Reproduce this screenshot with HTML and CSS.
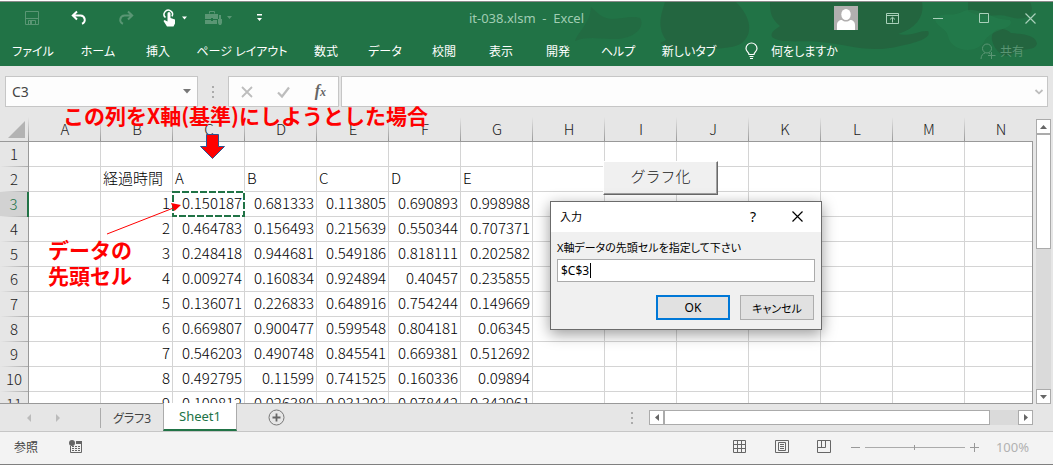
FILE: index.html
```html
<!DOCTYPE html>
<html lang="ja">
<head>
<meta charset="utf-8">
<meta name="viewport" content="width=device-width, initial-scale=1">
<title>it-038.xlsm - Excel</title>
<link rel="stylesheet" href="styles.css">
</head>
<body>
<div class="app">
  <header class="ribbon">
    <svg class="ribbon-art" width="500" height="64" viewBox="553 2 500 64" aria-hidden="true">
      <g fill="#23653f">
        <path d="M575 41C579 30 590 24 591 7L600 15C612 24 628 14 640 18C646 27 634 40 612 39C600 39 588 36 575 41Z" opacity=".6"/>
        <path d="M665 2H736C752 18 753 34 742 43C728 52 700 46 690 52C684 50 672 50 660 43L666 40C656 26 662 12 665 2Z" opacity=".9"/>
        <path d="M770 2H922C925 18 914 29 898 34C910 37 920 30 928 31C932 37 920 42 900 46C870 54 846 44 820 42C800 40 780 44 772 37C770 32 776 29 780 26C770 18 770 10 770 2Z"/>
        <path d="M968 2H1030C1036 14 1026 22 1010 17C996 12 982 20 968 11Z" opacity=".8"/>
        <path d="M992 40C990 28 1004 26 1011 33C1020 34 1036 34 1037 44C1034 52 1022 47 1012 54C1004 60 994 50 992 40Z"/>
      </g>
      <path d="M935 20C942 10 950 18 962 12C976 4 990 20 1010 20C1016 30 990 28 984 42C974 56 950 50 948 36C946 28 938 28 935 20Z" fill="#23804d" opacity=".5"/>
    </svg>
    <div class="titlebar">
      <div class="quick">
        <button class="icon dim q-save" aria-label="上書き保存"><svg width="16" height="16" viewBox="0 0 16 16"><path d="M1.500 1.500h13v13h-13zM2 8.500h12M4.500 14.500v-4h7v4" fill="none" stroke="currentColor"/><path d="M6 11h2v3H6z" fill="currentColor"/></svg></button>
        <button class="icon q-undo" aria-label="元に戻す"><svg width="16" height="16" viewBox="0 0 16 16"><path d="M6 1.500L1.800 5.500 6 9.500M2 5.500h7.500a4.300 4.300 0 0 1 1.500 8.300" fill="none" stroke="currentColor" stroke-width="2"/></svg></button>
        <button class="icon dim q-redo" aria-label="やり直し"><svg width="16" height="16" viewBox="0 0 16 16"><path d="M10 1.500l4.200 4L10 9.500M14 5.500H6.500A4.300 4.300 0 0 0 5 13.800" fill="none" stroke="currentColor" stroke-width="2"/></svg></button>
        <button class="icon q-touch" aria-label="タッチ/マウス モードの切り替え"><svg width="24" height="18" viewBox="0 0 24 18"><path d="M3.500 8.500a4.200 4.200 0 1 1 6.500-1.200" fill="none" stroke="currentColor" stroke-width="1.500"/><path d="M5.500 4.500a1.500 1.500 0 0 1 3 0v4.500l4.500 1.500v4l-1.500 3H5L1.500 12l1-1 3 1.500z" fill="currentColor"/><path d="M20 7.500h5l-2.500 3z" fill="currentColor"/></svg></button>
        <button class="icon dim q-tools" aria-label="ツール"><svg width="28" height="16" viewBox="0 0 28 16"><path d="M4.500 3.500v-2h5v2" fill="none" stroke="currentColor"/><path d="M0 4h13v5H8V8H6v1H0zM0 10h6v1h2v-1h4v4H0zM14 5h2v4h-2zM13 9h4v4l-1 2h-2l-1-2zM22 6h5l-2.500 3z" fill="currentColor"/></svg></button>
        <button class="icon q-more" aria-label="クイック アクセス ツール バーのユーザー設定"><svg width="7" height="8" viewBox="0 0 7 8"><path d="M1 0h5v1.500H1zM1 4h5L3.500 7z" fill="currentColor"/></svg></button>
      </div>
      <h1 class="title">it-038.xlsm  -  Excel</h1>
      <div class="winctl">
        <button class="icon avatar" aria-label="アカウント"><svg width="24" height="24" viewBox="0 0 24 24"><path fill="#b1afaf" d="M0 0h24v24H0z"/><g fill="#fff"><ellipse cx="12" cy="8.500" rx="4.700" ry="5.500"/><path d="M3 24v-5c0-3 2-5 5-5 2 2 6 2 8 0 3 0 5 2 5 5v5z"/></g></svg></button>
        <button class="icon options" aria-label="リボンの表示オプション"><svg width="13" height="11" viewBox="0 0 13 11"><path d="M.5.5h12v10H.5zM1 2.500h11M6.500 9.500V4.500M4 6.500l2.500-2.300L9 6.500" fill="none" stroke="currentColor"/></svg></button>
        <button class="icon" aria-label="最小化"><svg width="10" height="11" viewBox="0 0 10 11"><path d="M0 5.500h10" stroke="currentColor"/></svg></button>
        <button class="icon" aria-label="最大化"><svg width="10" height="10" viewBox="0 0 10 10"><path d="M.5.5h9v9h-9z" fill="none" stroke="currentColor"/></svg></button>
        <button class="icon" aria-label="閉じる"><svg width="11" height="11" viewBox="0 0 11 11"><path d="M.5.5l10 10M10.500.5l-10 10" stroke="currentColor" stroke-width="1.200"/></svg></button>
      </div>
    </div>
    <nav class="tabs">
      <div class="tablist">
        <button>ファイル</button><button>ホーム</button><button>挿入</button><button>ページ レイアウト</button><button>数式</button><button>データ</button><button>校閲</button><button>表示</button><button>開発</button><button>ヘルプ</button><button>新しいタブ</button>
      </div>
      <button class="tell"><svg width="13" height="17" viewBox="0 0 13 17"><path d="M4 11.500C4 9 1 8.500 1 5.500a5.300 5.300 0 0 1 11 0C12 8.500 9 9 9 11.500zM4.500 13.500h4M5 15.500h3" fill="none" stroke="currentColor" stroke-width="1.200"/></svg>何をしますか</button>
      <button class="share"><svg width="16" height="17" viewBox="0 0 16 17"><circle cx="7" cy="5.500" r="4.500" fill="none" stroke="currentColor"/><path d="M1 16c0-3.500 2-5.500 4-6M8.500 9.800l2 1.200M11.500 9v7M8 12.500h7.500" fill="none" stroke="currentColor"/></svg>共有</button>
    </nav>
  </header>

  <div class="formula">
    <div class="namebox"><input aria-label="名前ボックス" value="C3"><svg width="8" height="5" viewBox="0 0 8 5"><path d="M0 0h8L4 4.500z" fill="#777"/></svg></div>
    <span class="dots"></span>
    <div class="fx">
      <button aria-label="キャンセル"><svg width="12" height="12" viewBox="0 0 12 12"><path d="M1 1l10 10M11 1L1 11" stroke="#bdbdbd" stroke-width="1.800"/></svg></button>
      <button aria-label="入力"><svg width="13" height="12" viewBox="0 0 13 12"><path d="M1 6.500l4 4L12 1.500" fill="none" stroke="#bdbdbd" stroke-width="2.200"/></svg></button>
      <button class="fxbtn" aria-label="関数の挿入"><i>f</i><i class="sub">x</i></button>
    </div>
    <div class="fbar"><input aria-label="数式バー"><svg width="8" height="6" viewBox="0 0 8 6"><path d="M.5 1L4 4.300 7.500 1" fill="none" stroke="#bdbdbd" stroke-width="1.800"/></svg></div>
  </div>

  <main class="work">
    <div class="grid">
      <table>
        <colgroup><col class="c-head"><col span="14" class="c-cell"></colgroup>
        <thead>
          <tr><th class="corner"><svg width="17" height="17" viewBox="0 0 17 17"><path d="M17 0v17H0z" fill="#b3b3b3"/></svg></th><th>A<th>B<th>C<th>D<th>E<th>F<th>G<th>H<th>I<th>J<th>K<th>L<th>M<th>N</tr>
        </thead>
        <tbody>
          <tr><th>1<td><td><td><td><td><td><td><td><td><td><td><td><td><td></tr>
          <tr class="labels"><th>2<td><td>経過時間<td>A<td>B<td>C<td>D<td>E<td><td><td><td><td><td><td></tr>
          <tr class="current"><th>3<td><td>1<td>0.150187<td>0.681333<td>0.113805<td>0.690893<td>0.998988<td><td><td><td><td><td><td></tr>
          <tr><th>4<td><td>2<td>0.464783<td>0.156493<td>0.215639<td>0.550344<td>0.707371<td><td><td><td><td><td><td></tr>
          <tr><th>5<td><td>3<td>0.248418<td>0.944681<td>0.549186<td>0.818111<td>0.202582<td><td><td><td><td><td><td></tr>
          <tr><th>6<td><td>4<td>0.009274<td>0.160834<td>0.924894<td>0.40457<td>0.235855<td><td><td><td><td><td><td></tr>
          <tr><th>7<td><td>5<td>0.136071<td>0.226833<td>0.648916<td>0.754244<td>0.149669<td><td><td><td><td><td><td></tr>
          <tr><th>8<td><td>6<td>0.669807<td>0.900477<td>0.599548<td>0.804181<td>0.06345<td><td><td><td><td><td><td></tr>
          <tr><th>9<td><td>7<td>0.546203<td>0.490748<td>0.845541<td>0.669381<td>0.512692<td><td><td><td><td><td><td></tr>
          <tr><th>10<td><td>8<td>0.492795<td>0.11599<td>0.741525<td>0.160336<td>0.09894<td><td><td><td><td><td><td></tr>
          <tr><th>11<td><td>9<td>0.109812<td>0.026380<td>0.931203<td>0.078442<td>0.342961<td><td><td><td><td><td><td></tr>
        </tbody>
      </table>
    </div>
    <div class="vscroll">
      <button class="sbtn" aria-label="上へスクロール"><svg width="7" height="4" viewBox="0 0 7 4"><path d="M0 4h7L3.500 0z" fill="#666"/></svg></button>
      <div class="vtrack"><div class="vthumb"></div></div>
      <button class="sbtn" aria-label="下へスクロール"><svg width="7" height="4" viewBox="0 0 7 4"><path d="M0 0h7L3.500 4z" fill="#666"/></svg></button>
    </div>

    <svg class="marks" width="260" height="130" viewBox="0 0 260 130" aria-hidden="true">
      <rect x="173" y="75" width="71" height="24" fill="none" stroke="#fff" stroke-width="2"/>
      <rect x="173" y="75" width="71" height="24" fill="none" stroke="#217346" stroke-width="2" stroke-dasharray="7 2"/>
      <path d="M206.500 17.500h12v12h6L212.500 41.500l-12-12h6z" fill="#f00" stroke="#2f528f"/>
      <path d="M107 117L176 90" stroke="#f00" fill="none"/>
      <path d="M181 88l-10-2 3.500 8z" fill="#f00"/>
    </svg>
    <p class="note note-axis">この列をX軸(基準)にしようとした場合</p>
    <p class="note note-head">データの<br>先頭セル</p>
    <button class="chartbtn">グラフ化</button>

    <form class="dialog" role="dialog" aria-labelledby="dlg-title">
      <div class="dlg-bar">
        <h2 id="dlg-title">入力</h2>
        <button type="button" aria-label="ヘルプ">?</button>
        <button type="button" aria-label="閉じる"><svg width="11" height="11" viewBox="0 0 11 11"><path d="M.5.5l10 10M10.500.5l-10 10" stroke="#000" stroke-width="1.200"/></svg></button>
      </div>
      <div class="dlg-body">
        <label for="ref">X軸データの先頭セルを指定して下さい</label>
        <div class="dlg-field"><input id="ref" value="$C$3" size="4"><span class="caret"></span></div>
        <div class="dlg-actions"><button type="button" class="primary">OK</button><button type="button">キャンセル</button></div>
      </div>
    </form>
  </main>

  <div class="sheets">
    <div class="sheet-nav">
      <button aria-label="前のシート"><svg width="4" height="8" viewBox="0 0 4 8"><path d="M4 0v8L0 4z" fill="#bbb"/></svg></button>
      <button aria-label="次のシート"><svg width="4" height="8" viewBox="0 0 4 8"><path d="M0 0v8l4-4z" fill="#bbb"/></svg></button>
    </div>
    <button class="sheet">グラフ3</button>
    <button class="sheet active">Sheet1</button>
    <button class="add" aria-label="新しいシート"><svg width="17" height="17" viewBox="0 0 17 17"><circle cx="8.500" cy="8.500" r="7.500" fill="none" stroke="#777"/><path d="M8.500 4.500v8M4.500 8.500h8" stroke="#666" stroke-width="1.800"/></svg></button>
    <span class="dots"></span>
    <div class="hscroll">
      <button class="sbtn" aria-label="左へスクロール"><svg width="4" height="7" viewBox="0 0 4 7"><path d="M4 0v7L0 3.500z" fill="#666"/></svg></button>
      <div class="htrack"><div class="hthumb"></div></div>
      <button class="sbtn" aria-label="右へスクロール"><svg width="4" height="7" viewBox="0 0 4 7"><path d="M0 0v7l4-3.500z" fill="#666"/></svg></button>
    </div>
  </div>

  <footer class="status">
    <span>参照</span>
    <button class="macro" aria-label="マクロの記録"><svg width="14" height="14" viewBox="0 0 14 14"><path d="M1.500 6v6.500h11V2" fill="none" stroke="#666"/><path d="M7 1h6v3H7z" fill="#666"/><circle cx="3" cy="3" r="3" fill="#666"/><path d="M3 6.500h2m1 0h2m1 0h2M3 8.500h2m1 0h2m1 0h2M3 10.500h2m1 0h2m1 0h2" stroke="#666"/></svg></button>
    <div class="views">
      <button aria-label="標準"><svg width="14" height="14" viewBox="0 0 14 14"><path d="M.5.5h12v12H.5zM4.500.5v12M8.500.5v12M.5 4.500h12M.5 8.500h12" fill="none" stroke="#666"/></svg></button>
      <button aria-label="ページ レイアウト"><svg width="14" height="14" viewBox="0 0 14 14"><path d="M.5.5h13v12H.5zM3.500 2.500h7v8h-7zM5 4.500h4M5 6.500h4M5 8.500h4" fill="none" stroke="#666"/></svg></button>
      <button aria-label="改ページ プレビュー"><svg width="14" height="14" viewBox="0 0 14 14"><path d="M.5.5h13v12H.5zM.5 7.500h8M8.500 7.500v-7M4.500.5v7" fill="none" stroke="#666"/></svg></button>
    </div>
    <div class="zoom">
      <button aria-label="縮小"><svg width="9" height="9" viewBox="0 0 9 9"><path d="M0 4.500h9" stroke="#999"/></svg></button>
      <input type="range" min="0" max="200" value="100" aria-label="ズーム">
      <button aria-label="拡大"><svg width="9" height="9" viewBox="0 0 9 9"><path d="M0 4.500h9M4.500 0v9" stroke="#999"/></svg></button>
      <output>100%</output>
    </div>
  </footer>
</div>
</body>
</html>
```
FILE: styles.css
```css
* { box-sizing: border-box; }

body {
  margin: 0;
  font-family: "Noto Sans", "Noto Sans CJK JP", sans-serif;
  font-size: 12px;
  font-feature-settings: "palt";
  color: #222;
}

button, input {
  font: inherit;
  font-feature-settings: inherit;
  color: inherit;
  margin: 0;
  padding: 0;
  border: 0;
  background: none;
  outline: 0;
}

button { white-space: nowrap; }
svg { display: block; flex: none; overflow: visible; }

.app {
  display: flex;
  flex-direction: column;
  height: 100vh;
  overflow: hidden;
  background: #e6e6e6;
  border-top: 1px solid #fff;
}

/* title bar and ribbon tabs */
.ribbon {
  position: relative;
  background: #217346;
  border-top: 1px solid #8a8a8a;
  color: #fff;
}
.ribbon-art { position: absolute; top: 0; right: 0; }
.titlebar {
  position: relative;
  display: grid;
  grid-template-columns: 1fr auto 1fr;
  align-items: center;
  height: 32px;
}
.quick { display: flex; align-items: center; padding-left: 24px; }
.dim { color: #5a9674; }
.q-undo { margin-left: 31px; }
.q-redo { margin-left: 31px; }
.q-touch { margin-left: 28px; }
.q-tools { margin-left: 19px; }
.q-more { margin-left: 23px; }
.title {
  margin: 0;
  font-size: 13px;
  font-weight: 400;
  white-space: pre;
  color: #a0cdb3;
}
.winctl {
  display: flex;
  align-items: center;
  justify-content: flex-end;
  gap: 36px;
  padding-right: 17px;
  color: #a9d0ba;
}
.avatar { margin-right: -8px; }
.options { margin-right: -2px; }

.tabs { position: relative; display: flex; align-items: center; height: 32px; padding-top: 2px; }
.tablist {
  display: grid;
  grid-template-columns: 66px 64px 56px 112px 56px 62px 56px 58px 56px 64px 78px;
}
.tell, .share { display: flex; align-items: center; }
.tell { gap: 13px; margin-left: 17px; }
.share { gap: 4px; margin-left: auto; padding-right: 29px; color: #5a9674; }

/* formula bar */
.formula { display: flex; align-items: center; height: 51px; padding: 0 5px; }
.namebox, .fx, .fbar {
  display: flex;
  align-items: center;
  height: 31px;
  border: 1px solid #c6c6c6;
  background: #fdfdfd;
}
.namebox { width: 193px; padding: 0 6px; }
.namebox input { flex: 1; min-width: 0; font-size: 14px; color: #444; }
.dots {
  width: 2px;
  height: 12px;
  background: repeating-linear-gradient(#ababab 0 2px, transparent 2px 5px);
}
.formula .dots { margin: 0 14px; }
.fx { width: 111px; justify-content: space-between; padding: 0 12px; }
.fxbtn { font-family: "Liberation Serif", serif; font-size: 16px; font-weight: 700; color: #666; line-height: 16px; }
.sub { font-size: 12px; }
.fbar { flex: 1; margin-left: 2px; padding-right: 4px; }
.fbar input { flex: 1; min-width: 0; }

/* worksheet */
.work { position: relative; flex: 1; min-height: 0; display: flex; }
.grid {
  position: relative;
  flex: 1;
  min-width: 0;
  overflow: hidden;
  border-bottom: 1px solid #999;
}
.grid::after {
  content: "";
  position: absolute;
  top: 24px;
  right: 0;
  bottom: 0;
  border-right: 1px solid #999;
}
table {
  width: 1037px;
  table-layout: fixed;
  border-spacing: 0;
  font-family: "Noto Sans CJK JP", sans-serif;
  font-feature-settings: normal;
  font-size: 15px;
  font-weight: 300;
  line-height: 16px;
  color: #000;
}
.c-head { width: 29px; }
.c-cell { width: 72px; }
th, td { height: 25px; padding: 0 2px 2px; white-space: nowrap; overflow: hidden; }
th { font-weight: 300; text-align: center; color: #222; }
td { text-align: right; background: #fff; border-right: 1px solid #d4d4d4; border-bottom: 1px solid #d4d4d4; }
thead th {
  padding-bottom: 0;
  border-bottom: 1px solid #999;
  background: linear-gradient(#e6e6e6, #999) right / 1px 100% no-repeat;
}
.corner svg { margin-left: 6px; }
tbody th {
  border-right: 1px solid #999;
  background: linear-gradient(90deg, #e6e6e6, #ababab) bottom / 100% 1px no-repeat;
}
.labels td { text-align: left; }
.current th { color: #217346; background-color: #d2d2d2; border-right: 2px solid #217346; }

.vscroll { display: flex; flex-direction: column; width: 15px; margin: 2px 2px 0 3px; }
.sbtn {
  display: grid;
  place-items: center;
  flex: none;
  width: 15px;
  height: 15px;
  background: #fff;
  border: 1px solid #ababab;
}
.vtrack { flex: 1; background: #dadada; }
.vthumb { height: 45%; background: #fff; border: 1px solid #ababab; }

/* notes and controls lying over the cells */
.marks { position: absolute; top: 0; left: 0; pointer-events: none; }
.note {
  position: absolute;
  margin: 0;
  font-family: "Noto Sans CJK JP", sans-serif;
  font-feature-settings: normal;
  font-size: 21px;
  font-weight: 700;
  line-height: 26px;
  color: #f00;
  white-space: nowrap;
}
.note-axis { left: 63px; top: -15px; }
.note-head { left: 48px; top: 119px; }
.chartbtn {
  position: absolute;
  left: 603px;
  top: 44px;
  width: 115px;
  height: 34px;
  padding-bottom: 5px;
  background: #f0f0f0;
  border: 1px solid;
  border-color: #fff #696969 #696969 #fff;
  box-shadow: inset -1px -1px #a0a0a0;
  font-family: "Noto Sans CJK JP", sans-serif;
  font-size: 15px;
  font-weight: 300;
  font-feature-settings: normal;
}

.dialog {
  position: absolute;
  left: 550px;
  top: 84px;
  width: 272px;
  border: 1px solid #6b6b6b;
  background: #f0f0f0;
  color: #000;
  font-size: 11px;
  box-shadow: 0 4px 14px rgba(0, 0, 0, .4);
}
.dlg-bar { display: flex; align-items: center; gap: 36px; height: 30px; padding: 0 18px 2px 9px; background: #fff; }
.dlg-bar h2 { flex: 1; margin: 0; font-size: 11px; font-weight: 400; }
.dlg-bar button { font-size: 14px; }
.dlg-body { display: flex; flex-direction: column; padding: 8px 6px 9px; }
.dlg-body label { line-height: 16px; margin-bottom: 3px; }
.dlg-field { display: flex; align-items: center; height: 23px; padding-left: 3px; background: #fff; border: 1px solid #ababab; font-size: 12px; }
.dlg-field input { width: 29px; }
.caret { width: 1px; height: 15px; background: #000; }
.dlg-actions { display: flex; justify-content: flex-end; gap: 10px; margin-top: 13px; padding-right: 1px; }
.dlg-actions button { width: 74px; height: 25px; background: #e1e1e1; border: 1px solid #adadad; }
.dlg-actions .primary { border: 2px solid #0078d7; font-size: 12px; }

/* sheet tabs */
.sheets { display: flex; align-items: center; height: 28px; padding-right: 20px; border-bottom: 1px solid #c6c6c6; }
.sheet-nav { display: flex; gap: 25px; width: 101px; height: 20px; padding-left: 27px; border-right: 1px solid #ababab; }
.sheet { width: 62px; height: 28px; color: #444; }
.sheet.active {
  position: relative;
  width: 74px;
  margin-top: -1px;
  background: #fff;
  border: solid #ababab;
  border-width: 0 1px 2px;
  border-bottom-color: #217346;
  color: #217346;
  font-size: 13px;
  line-height: 24px;
}
.sheets .add { margin-left: 31px; }
.sheets .dots { margin: 0 16px 0 auto; }
.hscroll { display: flex; width: 384px; }
.htrack { flex: 1; background: #dadada; }
.hthumb { width: 92%; height: 15px; background: #fff; border: 1px solid #ababab; }

/* status bar */
.status {
  display: flex;
  align-items: center;
  height: 33px;
  padding: 0 24px 2px 14px;
  background: #f3f3f3;
  border-bottom: 1px solid #7f7f7f;
  color: #444;
}
.macro { margin-left: 31px; }
.views { display: flex; gap: 28px; margin-left: auto; }
.zoom { display: flex; align-items: center; margin-left: 20px; }
.zoom output { margin-left: 17px; font-size: 13px; color: #b1b1b1; }
.zoom input {
  appearance: none;
  width: 100px;
  height: 9px;
  margin: 0 5px;
  background: linear-gradient(#ababab, #ababab) center / 100% 1px no-repeat;
}
.zoom input::-webkit-slider-thumb { appearance: none; width: 1px; height: 5px; background: #999; }
```
